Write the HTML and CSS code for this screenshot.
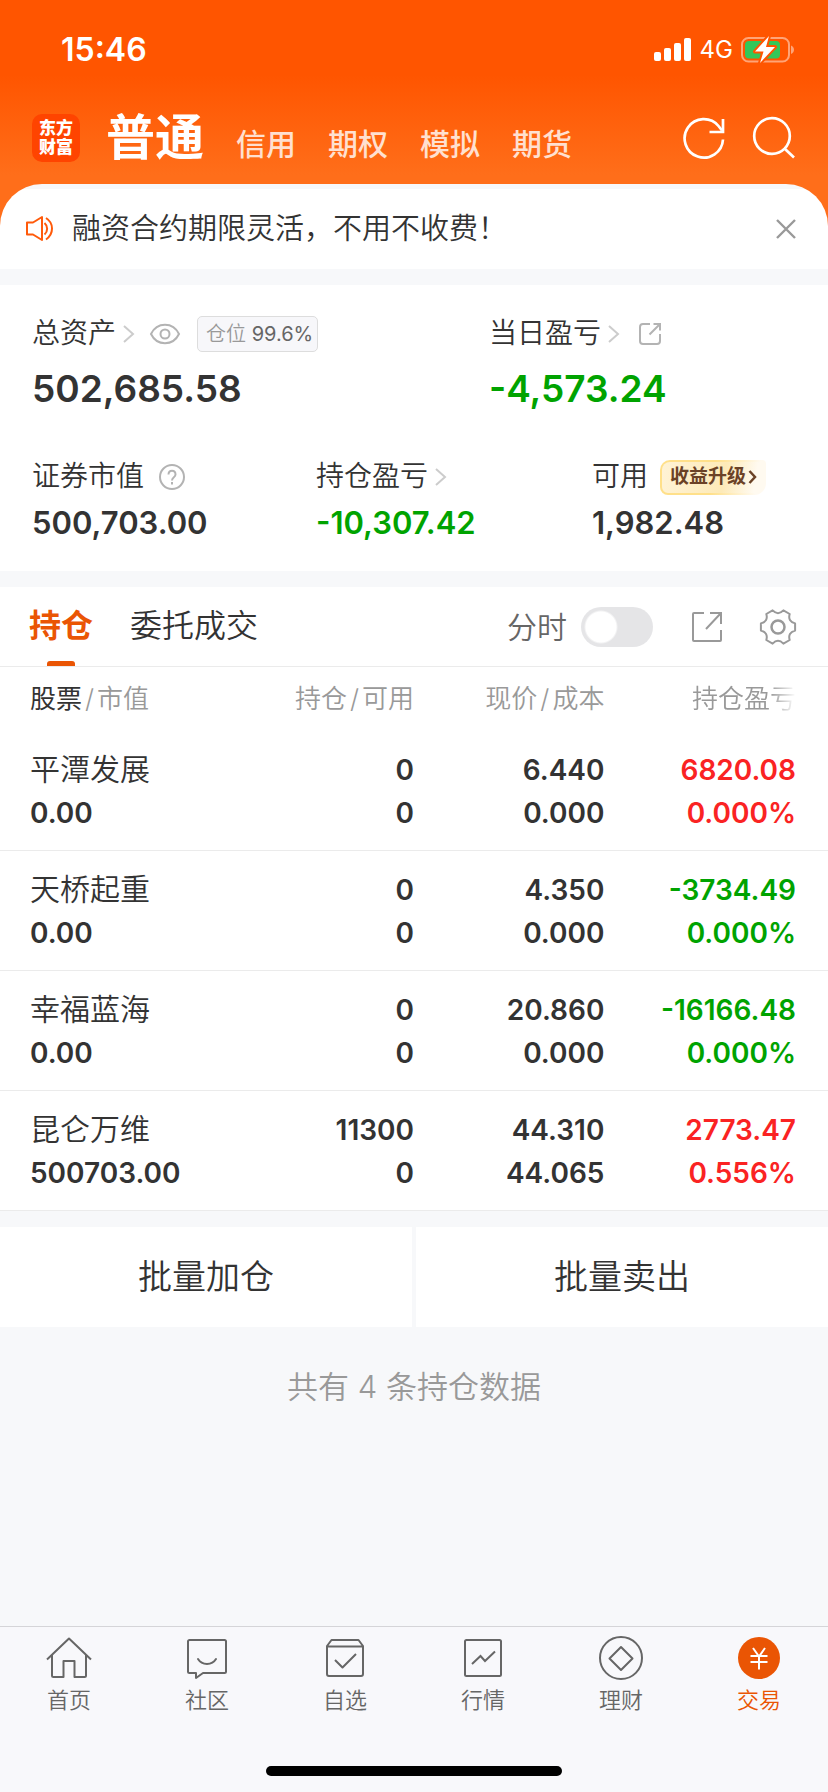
FILE: index.html
```html
<!DOCTYPE html>
<html lang="zh-CN">

<head>
    <meta charset="UTF-8">
    <meta name="viewport" content="width=device-width, initial-scale=1.0">
    <title>交易</title>
    <link rel="stylesheet" href="styles.css">
</head>

<body>
    <header class="header">
        <div class="status-bar">
            <span class="time">15:46</span>
            <div class="status-icons">
                <svg width="38" height="24" viewBox="0 0 38 24" fill="#fff">
                    <rect x="0" y="14" width="7" height="9" rx="2" />
                    <rect x="10" y="10" width="7" height="13" rx="2" />
                    <rect x="20" y="5" width="7" height="18" rx="2" />
                    <rect x="30" y="0" width="7" height="23" rx="2" />
                </svg>
                <span class="network">4G</span>
                <svg width="54" height="28" viewBox="0 0 54 28">
                    <rect x="1" y="2" width="47" height="23.500" rx="6.500" fill="none" stroke="#ffa477" stroke-width="2" />
                    <path d="M50 9.500c2 1 3 2.500 3 4.300s-1 3.300-3 4.300z" fill="#ffa477" />
                    <rect x="4" y="5" width="35" height="17.500" rx="4" fill="#34c759" />
                    <path d="M28 0L14 15.500h8.500L19 27l15-16h-9z" fill="#fff" stroke="#ff5500" stroke-width="4" paint-order="stroke" stroke-linejoin="round" />
                </svg>
            </div>
        </div>

        <div class="top-nav">
            <div class="logo">东方<br>财富</div>
            <nav class="accounts">
                <a class="current" href="#">普通</a>
                <a href="#">信用</a>
                <a href="#">期权</a>
                <a href="#">模拟</a>
                <a href="#">期货</a>
            </nav>
            <button class="icon-btn" aria-label="刷新">
                <svg width="44" height="44" viewBox="0 0 44 44" fill="none" stroke="#fff" stroke-width="2.700">
                    <path d="M41 23.500A19.200 19.200 0 1 1 36.500 10L40 14.500" />
                    <path d="M41 3v13H27.500" />
                </svg>
            </button>
            <button class="icon-btn" aria-label="搜索">
                <svg width="44" height="44" viewBox="0 0 44 44" fill="none" stroke="#fff" stroke-width="2.700">
                    <circle cx="20" cy="20" r="17.800" />
                    <path d="M32.500 32.500l9.500 9" />
                </svg>
            </button>
        </div>

        <div class="notice">
            <svg width="30" height="28" viewBox="0 0 30 28" fill="none" stroke="#ff5a0a" stroke-width="2" stroke-linejoin="round">
                <path d="M2 7.500h6L17 2v23l-9-5.500H2z" />
                <path d="M19.500 8c3.500 3 3.500 8.500 0 11.500M21 3c8 5 8 16 0 21.500" />
            </svg>
            <p class="notice-text">融资合约期限灵活，不用不收费！</p>
            <button class="close-btn" aria-label="关闭">
                <svg width="20" height="20" viewBox="0 0 20 20" stroke="#999" stroke-width="2.400">
                    <path d="M1 1l18 18M19 1L1 19" />
                </svg>
            </button>
        </div>
    </header>

    <main>
        <!-- Account summary -->
        <section class="assets">
            <div class="asset-row asset-main">
                <div class="asset">
                    <div class="asset-label">
                        总资产
                        <svg class="chevron" width="12" height="18" viewBox="0 0 12 18" fill="none" stroke="#ccc" stroke-width="2">
                            <path d="M1 1l9 8-9 8" />
                        </svg>
                        <button class="icon-btn eye" aria-label="隐藏资产">
                            <svg width="32" height="22" viewBox="0 0 32 22" fill="none" stroke="#b3b3b3" stroke-width="2">
                                <path d="M2 11C8-1.300 24-1.300 30 11 24 23.300 8 23.300 2 11z" />
                                <circle cx="16" cy="11" r="4.500" />
                            </svg>
                        </button>
                        <span class="position">仓位 <b>99.6%</b></span>
                    </div>
                    <div class="asset-value">502,685.58</div>
                </div>
                <div class="asset">
                    <div class="asset-label">
                        当日盈亏
                        <svg class="chevron" width="12" height="18" viewBox="0 0 12 18" fill="none" stroke="#ccc" stroke-width="2">
                            <path d="M1 1l9 8-9 8" />
                        </svg>
                        <button class="icon-btn share" aria-label="分享">
                            <svg width="24" height="24" viewBox="0 0 24 24" fill="none" stroke="#b3b3b3" stroke-width="2">
                                <path d="M12 2H5a3 3 0 0 0-3 3v14a3 3 0 0 0 3 3h14a3 3 0 0 0 3-3v-7M15.500 2H22v6.500M22 2L11.500 12.500" />
                            </svg>
                        </button>
                    </div>
                    <div class="asset-value green">-4,573.24</div>
                </div>
            </div>
            <div class="asset-row asset-sub">
                <div class="asset">
                    <div class="asset-label">
                        证券市值
                        <button class="icon-btn help" aria-label="说明">
                            <svg width="28" height="28" viewBox="0 0 28 28" fill="none" stroke="#b3b3b3" stroke-width="2">
                                <circle cx="14" cy="14" r="12" />
                                <path d="M10.500 11.500c0-5 7-5 7 0 0 3-3.500 2.500-3.500 6M14 19v2.500" />
                            </svg>
                        </button>
                    </div>
                    <div class="asset-value">500,703.00</div>
                </div>
                <div class="asset">
                    <div class="asset-label">
                        持仓盈亏
                        <svg class="chevron" width="12" height="18" viewBox="0 0 12 18" fill="none" stroke="#ccc" stroke-width="2">
                            <path d="M1 1l9 8-9 8" />
                        </svg>
                    </div>
                    <div class="asset-value green">-10,307.42</div>
                </div>
                <div class="asset">
                    <div class="asset-label">
                        可用
                        <a class="upgrade" href="#">收益升级<svg width="9" height="14" viewBox="0 0 9 14" fill="none" stroke="#6b4226" stroke-width="2.500">
                                <path d="M1.500 1l5.500 6-5.500 6" />
                            </svg></a>
                    </div>
                    <div class="asset-value">1,982.48</div>
                </div>
            </div>
        </section>

        <!-- Holdings -->
        <section class="holdings">
            <div class="tabs">
                <button class="tab active">持仓</button>
                <button class="tab">委托成交</button>
                <label class="switch">分时 <input type="checkbox"></label>
                <button class="icon-btn" aria-label="导出">
                    <svg width="32" height="32" viewBox="0 0 32 32" fill="none" stroke="#999" stroke-width="2">
                        <path d="M13 2H3a1 1 0 0 0-1 1v26a1 1 0 0 0 1 1h26a1 1 0 0 0 1-1V19M19 2h11v11M30 2L15 18" />
                    </svg>
                </button>
                <button class="icon-btn gear" aria-label="设置">
                    <svg width="38" height="38" viewBox="0 0 38 38" fill="none" stroke="#999" stroke-width="2" stroke-linejoin="round">
                        <path d="M36.100 15.400V22.600Q28.500 24.500 30.700 32L24.400 35.600Q19 30 13.600 35.600L7.300 32Q9.500 24.500 1.900 22.600V15.400Q9.500 13.500 7.300 6L13.600 2.400Q19 8 24.400 2.400L30.700 6Q28.500 13.500 36.100 15.400z" />
                        <circle cx="19" cy="19" r="6.500" stroke-width="2.500" />
                    </svg>
                </button>
            </div>

            <table class="stocks">
                <thead>
                    <tr>
                        <th><b>股票</b><i>/</i>市值</th>
                        <th>持仓<i>/</i>可用</th>
                        <th>现价<i>/</i>成本</th>
                        <th><span class="fade">持仓盈亏</span></th>
                    </tr>
                </thead>
                <tbody>
                    <tr>
                        <td><span class="name">平潭发展</span><br>0.00</td>
                        <td>0<br>0</td>
                        <td>6.440<br>0.000</td>
                        <td class="red">6820.08<br>0.000%</td>
                    </tr>
                    <tr>
                        <td><span class="name">天桥起重</span><br>0.00</td>
                        <td>0<br>0</td>
                        <td>4.350<br>0.000</td>
                        <td class="green">-3734.49<br>0.000%</td>
                    </tr>
                    <tr>
                        <td><span class="name">幸福蓝海</span><br>0.00</td>
                        <td>0<br>0</td>
                        <td>20.860<br>0.000</td>
                        <td class="green">-16166.48<br>0.000%</td>
                    </tr>
                    <tr>
                        <td><span class="name">昆仑万维</span><br>500703.00</td>
                        <td>11300<br>0</td>
                        <td>44.310<br>44.065</td>
                        <td class="red">2773.47<br>0.556%</td>
                    </tr>
                </tbody>
            </table>
        </section>

        <div class="batch">
            <button>批量加仓</button>
            <button>批量卖出</button>
        </div>
        <p class="total">共有 4 条持仓数据</p>
    </main>

    <footer class="tab-bar">
        <nav class="tab-items">
            <a href="#">
                <svg width="46" height="44" viewBox="0 0 46 44" fill="none" stroke="#666" stroke-width="2" stroke-linejoin="round">
                    <path d="M1 23.500L23 2.500l22 21" />
                    <path d="M6 19v20.500a1.500 1.500 0 0 0 1.500 1.500H17.500V25h11v16h10a1.500 1.500 0 0 0 1.500-1.500V19" />
                </svg>
                首页
            </a>
            <a href="#">
                <svg width="46" height="44" viewBox="0 0 46 44" fill="none" stroke="#666" stroke-width="2" stroke-linejoin="round" stroke-linecap="round">
                    <path d="M5.500 4h35a1.500 1.500 0 0 1 1.500 1.500v30a1.500 1.500 0 0 1-1.500 1.500H19l-7 5v-5H5.500A1.500 1.500 0 0 1 4 35.500v-30A1.500 1.500 0 0 1 5.500 4z" />
                    <path d="M14 23c4 6.500 14 6.500 18 0" />
                </svg>
                社区
            </a>
            <a href="#">
                <svg width="46" height="44" viewBox="0 0 46 44" fill="none" stroke="#666" stroke-width="2" stroke-linejoin="round">
                    <path d="M5 10l4.500-6h27L41 10v28a2 2 0 0 1-2 2H7a2 2 0 0 1-2-2zM5 10.500h36" />
                    <path d="M13 24l7.500 7.500L34 18" />
                </svg>
                自选
            </a>
            <a href="#">
                <svg width="46" height="44" viewBox="0 0 46 44" fill="none" stroke="#666" stroke-width="2">
                    <rect x="5" y="4" width="36" height="36" rx="1.500" />
                    <path d="M12 28l8.500-8 4.500 5 10-9.500" />
                </svg>
                行情
            </a>
            <a href="#">
                <svg width="46" height="44" viewBox="0 0 46 44" fill="none" stroke="#666" stroke-width="2" stroke-linejoin="round">
                    <circle cx="23" cy="22" r="21" />
                    <path d="M23 11l11.500 11.500L23 34 11.500 22.500z" />
                </svg>
                理财
            </a>
            <a class="selected" href="#">
                <svg width="46" height="44" viewBox="0 0 46 44" fill="none" stroke="#fff" stroke-width="2">
                    <circle cx="23" cy="22" r="21" fill="#ea5504" stroke="none" />
                    <path d="M17 12l6 8.500 6-8.500M23 20v13.500M14.500 20h17M14.500 26h17" />
                </svg>
                交易
            </a>
        </nav>
        <div class="home-indicator"></div>
    </footer>
</body>

</html>
```

FILE: styles.css
```css
* {
    margin: 0;
    padding: 0;
    box-sizing: border-box;
}

body {
    display: flex;
    flex-direction: column;
    min-height: 100vh;
    background: #f7f8fa;
    color: #333;
    font-family: Inter, "Noto Sans CJK SC", sans-serif;
    font-size: 28px;
    font-weight: 350;
    line-height: 1.2;
}

a {
    color: inherit;
    text-decoration: none;
}

button {
    border: none;
    background: none;
    color: inherit;
    font: inherit;
}

svg {
    display: block;
    flex-shrink: 0;
}

.icon-btn {
    display: flex;
}

.red {
    color: #fa2323;
}

.green {
    color: #00a300;
}

/* Orange header */
.header {
    background: linear-gradient(#ff5500 75px, #ff6e1a 175px);
}

.status-bar {
    display: flex;
    justify-content: space-between;
    align-items: center;
    height: 100px;
    padding: 0 33px 0 61px;
    color: #fff;
}

.time {
    font-size: 32px;
    font-weight: 600;
}

.status-icons {
    display: flex;
    align-items: center;
    gap: 8px;
}

.network {
    font-size: 24px;
    font-weight: 400;
}

.top-nav {
    display: flex;
    align-items: center;
    gap: 26px;
    height: 84px;
    padding: 0 32px;
    padding-bottom: 8px;
    color: #fff;
}

.logo {
    width: 48px;
    height: 48px;
    padding-top: 5px;
    border-radius: 10px;
    background: #ff4400;
    font-size: 17px;
    font-weight: 900;
    line-height: 19px;
    text-align: center;
}

.accounts {
    display: flex;
    flex: 1;
    align-items: baseline;
    gap: 32px;
    padding-top: 6px;
    color: #ffe0d0;
    font-size: 30px;
    font-weight: 500;
    line-height: 48px;
}

.accounts .current {
    color: #fff;
    font-size: 49px;
    font-weight: 700;
}

.notice {
    display: flex;
    align-items: center;
    height: 85px;
    padding: 5px 32px 0 25px;
    border-radius: 42px 42px 0 0;
    background: linear-gradient(#f7f8fa 5px, #fff 5px);
}

.notice-text {
    flex: 1;
    margin-left: 17px;
    font-size: 29px;
}

/* Account summary */
.assets {
    margin: 16px 0;
    padding: 25px 32px 26px;
    background: #fff;
}

.asset-row {
    display: grid;
}

.asset-main {
    grid-template-columns: 457fr 307fr;
    margin-bottom: 34px;
}

.asset-sub {
    grid-template-columns: 284fr 276fr 204fr;
}

.asset-label {
    display: flex;
    align-items: center;
    height: 48px;
    white-space: nowrap;
}

.asset-value {
    font-size: 31px;
    font-weight: 600;
    line-height: 44px;
}

.asset-main .asset-value {
    font-size: 37px;
    line-height: 61px;
}

.chevron {
    margin-left: 7px;
}

.eye {
    margin-left: 14px;
}

.share {
    margin-left: 18px;
}

.help {
    margin-left: 14px;
}

.position {
    margin-left: 16px;
    padding: 0 4px 0 8px;
    border: 1px solid #ddd;
    border-radius: 5px;
    background: #f7f7fa;
    color: #999;
    font-size: 20px;
    line-height: 34px;
}

.position b {
    color: #666;
    font-weight: 400;
}

.upgrade {
    display: flex;
    align-items: center;
    gap: 2px;
    height: 35px;
    margin-left: 12px;
    padding: 0 7px 0 8px;
    border: 2px solid transparent;
    border-radius: 10px 4px 12px 8px;
    background:
        linear-gradient(100deg, #fff3d6, #fdeab8 60%, #fffaf0 90%) padding-box,
        linear-gradient(100deg, #ffe08a 50%, #fffaf0 90%) border-box;
    color: #6b4226;
    font-size: 19px;
    font-weight: 700;
}

/* Holdings */
.holdings {
    background: #fff;
}

.tabs {
    display: flex;
    align-items: center;
    height: 80px;
    padding: 0 31px 0 29px;
    border-bottom: 1px solid #ebebeb;
}

.tab {
    position: relative;
    height: 79px;
    margin-right: 37px;
    font-size: 32px;
}

.tab.active {
    color: #ea5504;
    font-weight: 700;
}

.tab.active::after {
    content: "";
    position: absolute;
    bottom: 0;
    left: 50%;
    width: 28px;
    height: 5px;
    margin-left: -14px;
    border-radius: 3px 3px 0 0;
    background: #ea5504;
}

.switch {
    display: flex;
    align-items: center;
    gap: 14px;
    margin: 0 38px 0 auto;
    color: #666;
    font-size: 30px;
}

.switch input {
    width: 72px;
    height: 40px;
    border-radius: 20px;
    background: radial-gradient(circle at 20px 20px, #fff 15px, #e5e5e7 17px);
    appearance: none;
}

.switch input:checked {
    background: radial-gradient(circle at 52px 20px, #fff 15px, #ea5504 17px);
}

.gear {
    margin-left: 36px;
}

.stocks {
    width: 100%;
    border-spacing: 0;
    table-layout: fixed;
    text-align: right;
}

.stocks th {
    width: 23%;
    height: 64px;
    color: #999;
    font-size: 26px;
    font-weight: 350;
}

.stocks th:first-child {
    width: 27%;
}

.stocks th:last-child {
    width: 27%;
}

.stocks th:first-child,
.stocks td:first-child {
    padding-left: 30px;
    text-align: left;
}

.stocks th:last-child,
.stocks td:last-child {
    padding-right: 32px;
}

.stocks th b {
    color: #333;
    font-weight: 400;
}

.stocks th i {
    padding: 0 3px;
    font-style: normal;
}

.fade {
    mask-image: linear-gradient(to right, #000 75%, transparent);
}

.stocks td {
    height: 120px;
    padding: 18px 0 15px;
    border-bottom: 1px solid #ebebeb;
    font-weight: 600;
    line-height: 43px;
}

.name {
    font-size: 30px;
    font-weight: 350;
    line-height: 1;
}

.batch {
    display: flex;
    gap: 4px;
    margin-top: 16px;
}

.batch button {
    flex: 1;
    height: 100px;
    background: #fff;
    font-size: 34px;
}

.total {
    margin-top: 36px;
    color: #999;
    font-size: 31px;
    line-height: 48px;
    text-align: center;
}

/* Bottom bar */
.tab-bar {
    margin-top: auto;
    padding-bottom: 16px;
    border-top: 1px solid #d5d5d8;
    background: #f8f8fb;
}

.tab-items {
    display: flex;
    height: 139px;
    padding-top: 9px;
}

.tab-items a {
    display: flex;
    flex: 1;
    flex-direction: column;
    align-items: center;
    gap: 7px;
    color: #666;
    font-size: 22px;
}

.tab-items .selected {
    color: #ea5504;
}

.home-indicator {
    width: 296px;
    height: 10px;
    margin: 0 auto;
    border-radius: 5px;
    background: #000;
}
```
